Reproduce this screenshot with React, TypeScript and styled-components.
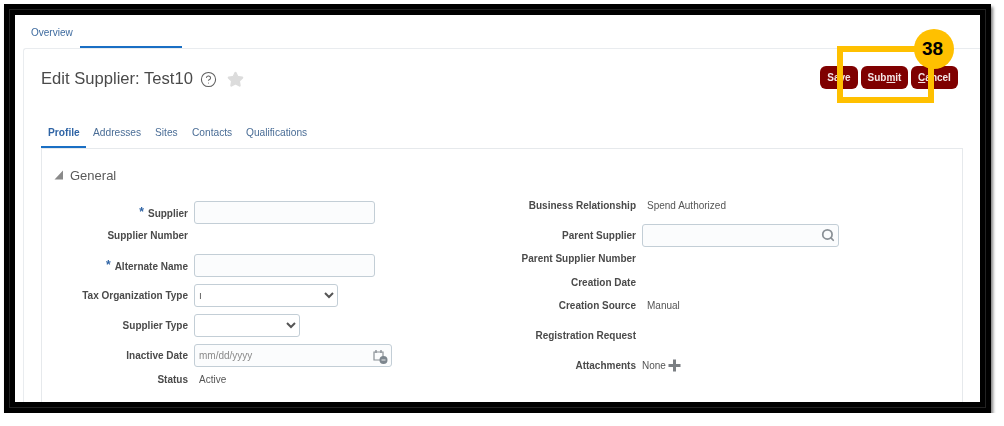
import React from "react";
import styled, { createGlobalStyle } from "styled-components";
import { CircleHelp, Search, Star } from "lucide-react";

const GlobalStyle = createGlobalStyle`
    html, body {
        margin: 0;
        padding: 0;
        background: #fff;
        font-family: "Liberation Sans", Arial, sans-serif;
    }
`;

const Frame = styled.div`
    position: relative;
    box-sizing: border-box;
    width: 987px;
    height: 409px;
    margin: 4px 0 0 4px;
    border: 11px solid #000;
    outline: 1px solid #222;
    outline-offset: -6px;
    box-shadow: 2px 3px 3px rgba(0, 0, 0, 0.5);
    background: #fff;
    overflow: hidden;
    filter: blur(0.35px);
`;

const TopTabs = styled.div`
    display: flex;
    height: 33px;
    padding-left: 16px;
`;

const TopTab = styled.a`
    display: block;
    font-size: 10px;
    line-height: 36px;
    color: #3d6a9e;
`;

const TopTabMarker = styled.div`
    align-self: flex-end;
    width: 102px;
    height: 2px;
    margin-left: 7px;
    background: #1a6fc4;
`;

const Card = styled.div`
    box-sizing: border-box;
    height: 400px;
    margin-left: 8px;
    padding: 0 18px 0 17px;
    border-top: 1px solid #e9ecef;
    border-left: 1px solid #e9ecef;
    border-top-left-radius: 3px;
`;

const Header = styled.div`
    display: flex;
    align-items: flex-start;
    justify-content: space-between;
    height: 63px;
    padding-right: 4px;
`;

const TitleGroup = styled.div`
    display: flex;
    align-items: center;
    height: 30px;
    margin-top: 15px;
    color: #5f5f5f;
`;

const Title = styled.h1`
    margin: 0 7px 0 0;
    font-size: 16.6px;
    font-weight: 400;
    color: #4a4a4a;
`;

const FavStar = styled(Star)`
    margin-left: 10px;
    color: #dcdcdc;
    fill: #dcdcdc;
`;

const Actions = styled.div`
    display: flex;
    gap: 3px;
    margin-top: 17px;
`;

const ActionButton = styled.button<{ $w: number }>`
    box-sizing: border-box;
    width: ${({ $w }) => $w}px;
    height: 23px;
    padding: 0;
    border: 0;
    border-radius: 6px;
    background: #7f0000;
    color: #f4e6e6;
    font: 700 10px "Liberation Sans", Arial, sans-serif;

    u {
        text-underline-offset: 1px;
    }
`;

const SubTabs = styled.div`
    display: flex;
    box-sizing: border-box;
    height: 36px;
    padding: 6px 0 0 7px;
`;

const SubTab = styled.a<{ $active?: boolean; $w: number }>`
    display: block;
    width: ${({ $w }) => $w}px;
    font-size: 10.2px;
    line-height: 30px;
    font-weight: ${({ $active }) => ($active ? 700 : 400)};
    color: ${({ $active }) => ($active ? "#2f64a5" : "#4a6d96")};
`;

const SubTabMarker = styled.div`
    position: absolute;
    left: 26px;
    top: 131px;
    width: 45px;
    height: 2px;
    background: #1a6fc4;
`;

const Panel = styled.section`
    box-sizing: border-box;
    width: 922px;
    height: 300px;
    border-top: 1px solid #e6e9ec;
    border-left: 1px solid #e6e9ec;
    border-right: 1px solid #e6e9ec;
`;

const SectionHead = styled.div`
    display: flex;
    align-items: center;
    gap: 6px;
    height: 16px;
    margin: 18px 0 0 12px;
    font-size: 13px;
    color: #5a5a5a;
`;

const Columns = styled.div`
    display: grid;
    grid-template-columns: 450px 1fr;
    padding-top: 7px;
`;

const LeftColumn = styled.div`
    padding-top: 7px;
`;

const RightColumn = styled.div``;

const Row = styled.div<{ $h: number; $top?: number; $label: number; $gap?: number }>`
    display: grid;
    grid-template-columns: ${({ $label }) => $label}px 1fr;
    column-gap: ${({ $gap }) => $gap ?? 6}px;
    align-items: center;
    height: ${({ $h }) => $h}px;
    margin-top: ${({ $top }) => $top ?? 0}px;
`;

const Label = styled.label`
    font-size: 10px;
    font-weight: 700;
    text-align: right;
    white-space: nowrap;
    color: #4a4a4a;
`;

const Required = styled.span`
    margin-right: 4px;
    color: #2f64a5;
    font-size: 12px;
    vertical-align: 1px;
`;

const Value = styled.span<{ $indent?: number }>`
    margin-left: ${({ $indent }) => $indent ?? 5}px;
    font-size: 10px;
    color: #555;
`;

const Field = styled.div<{ $w: number }>`
    position: relative;
    width: ${({ $w }) => $w}px;
    height: 23px;
`;

const TextInput = styled.input`
    box-sizing: border-box;
    width: 100%;
    height: 100%;
    padding: 0 4px;
    border: 1px solid #c3ced6;
    border-radius: 3px;
    background: #fbfcfd;
    font: 10px "Liberation Sans", Arial, sans-serif;
    color: #555;

    &::placeholder {
        color: #8a8a8a;
    }
`;

const SelectBox = styled.select<{ $w: number }>`
    box-sizing: border-box;
    width: ${({ $w }) => $w}px;
    height: 23px;
    border: 1px solid #c3ced6;
    border-radius: 3px;
    background: #fff;
    font: 10px "Liberation Sans", Arial, sans-serif;
    color: #555;
`;

const FieldIcon = styled.span`
    position: absolute;
    top: 4px;
    right: 4px;
    display: flex;
    color: #8a9096;
`;

const AttachmentValue = styled.div`
    display: flex;
    align-items: center;
    gap: 2px;
`;

const Callout = styled.div`
    position: absolute;
    left: 822px;
    top: 31px;
    box-sizing: border-box;
    width: 97px;
    height: 57px;
    border: 6px solid #ffc000;
`;

const CalloutBadge = styled.div`
    position: absolute;
    left: 899px;
    top: 14px;
    box-sizing: border-box;
    display: flex;
    align-items: center;
    justify-content: center;
    width: 40px;
    height: 40px;
    padding-right: 3px;
    border-radius: 50%;
    background: #ffc000;
    color: #000;
    font-size: 19px;
    font-weight: 700;
`;

const CalendarIcon = () => (
    <svg width="16" height="17" viewBox="0 0 16 17" fill="none">
        <path d="M2 4h9v8H2z" stroke="#8a9096" strokeWidth="1.2" />
        <path d="M4 2v3M9 2v3" stroke="#8a9096" strokeWidth="1.4" />
        <circle cx="11.5" cy="12" r="4" fill="#7d868e" />
        <path d="M9.5 12h4" stroke="#e8eaec" strokeWidth="1" />
    </svg>
);

const PlusIcon = () => (
    <svg width="13" height="13" viewBox="0 0 13 13">
        <path d="M5 0.5h3v4.5h4.5v3H8v4.5H5V8H0.5V5H5z" fill="#7b7f83" />
    </svg>
);

const Caret = () => (
    <svg width="10" height="10" viewBox="0 0 10 10">
        <path d="M9 0.5v9H0.5z" fill="#8a8a8a" />
    </svg>
);

export default function App() {
    return (
        <>
            <GlobalStyle />
            <Frame>
                <TopTabs>
                    <TopTab>Overview</TopTab>
                    <TopTabMarker />
                </TopTabs>
                <Card>
                    <Header>
                        <TitleGroup>
                            <Title>Edit Supplier: Test10</Title>
                            <CircleHelp size={17} strokeWidth={1.5} />
                            <FavStar size={17} strokeLinejoin="miter" />
                        </TitleGroup>
                        <Actions>
                            <ActionButton $w={38}>Save</ActionButton>
                            <ActionButton $w={47}>
                                Sub<u>m</u>it
                            </ActionButton>
                            <ActionButton $w={47}>
                                <u>C</u>ancel
                            </ActionButton>
                        </Actions>
                    </Header>
                    <SubTabs>
                        <SubTab $active $w={45}>Profile</SubTab>
                        <SubTab $w={62}>Addresses</SubTab>
                        <SubTab $w={37}>Sites</SubTab>
                        <SubTab $w={54}>Contacts</SubTab>
                        <SubTab $w={80}>Qualifications</SubTab>
                    </SubTabs>
                    <SubTabMarker />
                    <Panel>
                        <SectionHead>
                            <Caret />
                            General
                        </SectionHead>
                        <Columns>
                            <LeftColumn>
                                <Row $label={146} $h={30}>
                                    <Label><Required>*</Required>Supplier</Label>
                                    <Field $w={181}><TextInput /></Field>
                                </Row>
                                <Row $label={146} $h={16}>
                                    <Label>Supplier Number</Label>
                                </Row>
                                <Row $label={146} $h={30} $top={7}>
                                    <Label><Required>*</Required>Alternate Name</Label>
                                    <Field $w={181}><TextInput /></Field>
                                </Row>
                                <Row $label={146} $h={30}>
                                    <Label>Tax Organization Type</Label>
                                    <SelectBox $w={144}><option>ı</option></SelectBox>
                                </Row>
                                <Row $label={146} $h={30}>
                                    <Label>Supplier Type</Label>
                                    <SelectBox $w={106}><option></option></SelectBox>
                                </Row>
                                <Row $label={146} $h={30}>
                                    <Label>Inactive Date</Label>
                                    <Field $w={198}>
                                        <TextInput placeholder="mm/dd/yyyy" />
                                        <FieldIcon><CalendarIcon /></FieldIcon>
                                    </Field>
                                </Row>
                                <Row $label={146} $h={18}>
                                    <Label>Status</Label>
                                    <Value>Active</Value>
                                </Row>
                            </LeftColumn>
                            <RightColumn>
                                <Row $label={144} $h={30}>
                                    <Label>Business Relationship</Label>
                                    <Value>Spend Authorized</Value>
                                </Row>
                                <Row $label={144} $h={30}>
                                    <Label>Parent Supplier</Label>
                                    <Field $w={197}>
                                        <TextInput />
                                        <FieldIcon><Search size={14} strokeWidth={3} /></FieldIcon>
                                    </Field>
                                </Row>
                                <Row $label={144} $h={16}>
                                    <Label>Parent Supplier Number</Label>
                                </Row>
                                <Row $label={144} $h={16} $top={8}>
                                    <Label>Creation Date</Label>
                                </Row>
                                <Row $label={144} $h={30}>
                                    <Label>Creation Source</Label>
                                    <Value>Manual</Value>
                                </Row>
                                <Row $label={144} $h={30}>
                                    <Label>Registration Request</Label>
                                </Row>
                                <Row $label={144} $h={30}>
                                    <Label>Attachments</Label>
                                    <AttachmentValue>
                                        <Value $indent={0}>None</Value>
                                        <PlusIcon />
                                    </AttachmentValue>
                                </Row>
                            </RightColumn>
                        </Columns>
                    </Panel>
                </Card>
                <Callout />
                <CalloutBadge>38</CalloutBadge>
            </Frame>
        </>
    );
}
